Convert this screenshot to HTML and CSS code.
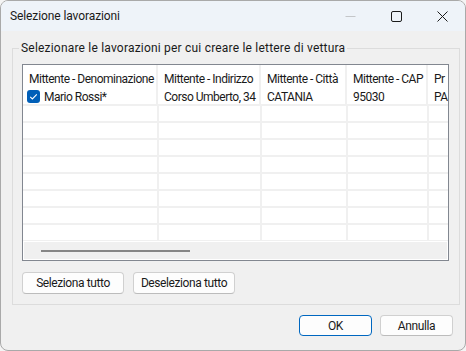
FILE: index.html
```html
<!DOCTYPE html>
<html lang="it">
<head>
    <meta charset="UTF-8">
    <title>Selezione lavorazioni</title>
    <link rel="stylesheet" href="styles.css">
</head>
<body>
    <div class="window">
        <!-- Barra del titolo -->
        <div class="titlebar">
            <span class="title">Selezione lavorazioni</span>
            <div class="caption-buttons">
                <span class="cap cap-min">
                    <svg width="11" height="11" viewBox="0 0 11 11"><path d="M0.5 5.5h10" stroke="#c4c6c9" stroke-width="1"/></svg>
                </span>
                <span class="cap cap-max">
                    <svg width="11" height="11" viewBox="0 0 11 11"><rect x="0.5" y="0.5" width="10" height="10" rx="1.5" fill="none" stroke="#1b1b1b" stroke-width="1"/></svg>
                </span>
                <span class="cap cap-close">
                    <svg width="11" height="11" viewBox="0 0 11 11"><path d="M0.5 0.5l10 10M10.5 0.5l-10 10" stroke="#1b1b1b" stroke-width="1"/></svg>
                </span>
            </div>
        </div>

        <!-- Contenuto -->
        <div class="content">
            <fieldset class="group">
                <legend>Selezionare le lavorazioni per cui creare le lettere di vettura</legend>

                <div class="listview">
                    <div class="grid">
                        <div class="hcell c1">Mittente - Denominazione</div>
                        <div class="hcell c2">Mittente - Indirizzo</div>
                        <div class="hcell c3">Mittente - Città</div>
                        <div class="hcell c4">Mittente - CAP</div>
                        <div class="hcell c5">Pr</div>

                        <div class="cell c1">
                            <span class="check">
                                <svg width="9" height="9" viewBox="0 0 9 9"><path d="M1.2 4.8l2.2 2.1 4.4-4.6" fill="none" stroke="#fff" stroke-width="1.1"/></svg>
                            </span>
                            Mario Rossi*
                        </div>
                        <div class="cell c2">Corso Umberto, 34</div>
                        <div class="cell c3">CATANIA</div>
                        <div class="cell c4">95030</div>
                        <div class="cell c5">PA</div>
                    </div>
                    <div class="empty-rows"></div>
                    <div class="hscroll">
                        <div class="thumb"></div>
                    </div>
                </div>

                <div class="group-buttons">
                    <button class="btn btn-wide">Seleziona tutto</button>
                    <button class="btn btn-wide">Deseleziona tutto</button>
                </div>
            </fieldset>

            <div class="dialog-buttons">
                <button class="btn btn-dlg btn-default">OK</button>
                <button class="btn btn-dlg">Annulla</button>
            </div>
        </div>
    </div>
</body>
</html>
```

FILE: styles.css
```css
* {
    margin: 0;
    padding: 0;
    box-sizing: border-box;
}

body {
    background: #f4f4f4;
    font-family: Roboto, "Liberation Sans", sans-serif;
    font-size: 12px;
    color: #000;
    width: 466px;
    height: 351px;
    overflow: hidden;
}

/* Finestra */
.window {
    width: 466px;
    height: 351px;
    border: 1px solid #a9a9a9;
    border-radius: 8px;
    overflow: hidden;
    background: #f0f0f0;
    display: flex;
    flex-direction: column;
}

.titlebar {
    height: 30px;
    background: #eef3f9;
    display: flex;
    align-items: center;
    padding-left: 9px;
    flex-shrink: 0;
}

.title {
    font-size: 12px;
    color: #1a1a1a;
    letter-spacing: -0.1px;
    flex: 1;
}

.caption-buttons {
    display: flex;
    height: 100%;
}

.cap {
    width: 46px;
    height: 100%;
    display: flex;
    align-items: center;
    justify-content: center;
}

/* Contenuto */
.content {
    flex: 1;
    padding: 9px 11px 0 11px;
    display: flex;
    flex-direction: column;
}

.group {
    border: 1px solid #dcdcdc;
    padding: 8px 10px 9px 9px;
    height: 265px;
}

.group legend {
    margin-left: -3px;
    padding: 0 2px;
    color: #1a1a1a;
    line-height: 16px;
    letter-spacing: 0.2px;
}

/* Lista */
.listview {
    border: 1px solid #828790;
    background: #fff;
    height: 197px;
    overflow: hidden;
    display: flex;
    flex-direction: column;
}

.grid {
    display: grid;
    grid-template-columns: 135px 103px 86px 81px 20px;
    grid-template-rows: 24px 17px;
    letter-spacing: -0.5px;
}

.hcell {
    display: flex;
    align-items: center;
    padding: 3px 0 0 6px;
    border-right: 2px solid #f0f0f0;
    white-space: nowrap;
    overflow: hidden;
    color: #1a1a1a;
}

.cell {
    display: flex;
    align-items: center;
    padding: 1px 0 0 6px;
    border-right: 2px solid #f0f0f0;
    border-bottom: 2px solid #f0f0f0;
    white-space: nowrap;
    overflow: hidden;
    color: #1a1a1a;
}

.cell.c1 {
    padding-left: 4px;
    gap: 4px;
}

.c5 {
    border-right: none;
}

.check {
    width: 13px;
    height: 13px;
    border-radius: 3px;
    background: #005fb8;
    display: flex;
    align-items: center;
    justify-content: center;
    margin-top: -1px;
}

.empty-rows {
    flex: 1;
    background-image:
        linear-gradient(to right, transparent 134px, #f0f0f0 134px, #f0f0f0 136px, transparent 136px,
            transparent 237px, #f0f0f0 237px, #f0f0f0 239px, transparent 239px,
            transparent 323px, #f0f0f0 323px, #f0f0f0 325px, transparent 325px,
            transparent 404px, #f0f0f0 404px, #f0f0f0 406px, transparent 406px),
        repeating-linear-gradient(to bottom, transparent 0, transparent 15px, #f0f0f0 15px, #f0f0f0 17px);
}

.hscroll {
    height: 17px;
    background: #f0f0f0;
    margin: 1px;
    display: flex;
    align-items: center;
    padding-left: 17px;
}

.thumb {
    width: 149px;
    height: 2px;
    background: #868686;
}

/* Pulsanti */
.group-buttons {
    display: flex;
    gap: 9px;
    margin-top: 11px;
}

.btn {
    font-family: Roboto, "Liberation Sans", sans-serif;
    font-size: 12px;
    letter-spacing: -0.4px;
    color: #1a1a1a;
    background: #fdfdfd;
    border: 1px solid #d0d0d0;
    border-bottom-color: #bcbcbc;
    border-radius: 4px;
    height: 22px;
}

.btn-wide {
    width: 102px;
}

.dialog-buttons {
    display: flex;
    justify-content: flex-end;
    gap: 8px;
    margin-top: 10px;
    padding-right: 1px;
}

.btn-dlg {
    width: 73px;
    height: 21px;
}

.btn-default {
    border: 1px solid #0067c0;
}
```
